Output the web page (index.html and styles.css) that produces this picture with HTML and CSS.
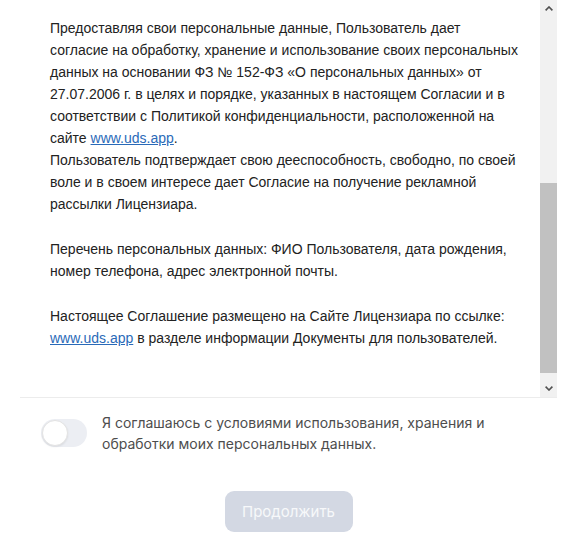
FILE: index.html
```html
<!DOCTYPE html>
<html lang="ru">
<head>
  <meta charset="UTF-8">
  <meta name="viewport" content="width=device-width, initial-scale=1.0">
  <title>Согласие на обработку персональных данных</title>
  <link rel="stylesheet" href="styles.css">
</head>
<body>
  <div class="sheet">
    <div class="terms-box">
      <div class="terms" id="terms">
        <h2 class="terms-title">Согласие на обработку персональных данных</h2>
        <p>Настоящим Пользователь, действуя свободно, своей волей и в своем интересе, а также подтверждая свою дееспособность, предоставляет Лицензиару согласие на обработку своих персональных данных. Под обработкой персональных данных понимается любое действие или совокупность действий, совершаемых с использованием средств автоматизации или без использования таких средств, включая сбор, запись, систематизацию, накопление, хранение, уточнение, извлечение, использование, передачу, удаление и уничтожение персональных данных.</p>
        <p>Согласие действует с момента его предоставления и до момента его отзыва Пользователем. Отзыв согласия может быть осуществлен путем направления Лицензиару письменного уведомления.</p>
        <p id="start">Предоставляя свои персональные данные, Пользователь дает согласие на обработку, хранение и использование своих персональных данных на основании ФЗ № 152-ФЗ «О персональных данных» от 27.07.2006 г. в целях и порядке, указанных в настоящем Согласии и в соответствии с Политикой конфиденциальности, расположенной на сайте <a href="#">www.uds.app</a>.<br>Пользователь подтверждает свою дееспособность, свободно, по своей воле и в своем интересе дает Согласие на получение рекламной рассылки Лицензиара.</p>
        <p>Перечень персональных данных: ФИО Пользователя, дата рождения, номер телефона, адрес электронной почты.</p>
        <p>Настоящее Соглашение размещено на Сайте Лицензиара по ссылке: <a href="#">www.uds.app</a> в разделе информации Документы для пользователей.</p>
      </div>
      <div class="scrollbar">
        <span class="sb-btn">
          <svg width="8" height="5" viewBox="0 0 8 5"><path d="M0.6 4.4 L4 1 L7.4 4.4" fill="none" stroke="#505050" stroke-width="1.6"/></svg>
        </span>
        <div class="sb-track" id="track">
          <div class="sb-thumb" id="thumb"></div>
        </div>
        <span class="sb-btn">
          <svg width="8" height="5" viewBox="0 0 8 5"><path d="M0.6 0.6 L4 4 L7.4 0.6" fill="none" stroke="#505050" stroke-width="1.6"/></svg>
        </span>
      </div>
    </div>

    <label class="agree">
      <span class="switch"><span class="knob"></span></span>
      <span class="agree-text">Я соглашаюсь с условиями использования, хранения и обработки моих персональных данных.</span>
    </label>

    <div class="actions">
      <button class="btn" disabled>Продолжить</button>
    </div>
  </div>
<script>
const terms = document.getElementById('terms');
const start = document.getElementById('start');
const track = document.getElementById('track');
const thumb = document.getElementById('thumb');

// show the end of the agreement, as after reading it through
terms.scrollTop = start.offsetTop - 17;

// place the thumb from the scroll position
function updateThumb() {
  const h = track.clientHeight;
  const total = terms.scrollHeight;
  thumb.style.height = Math.round(h * terms.clientHeight / total) + 'px';
  thumb.style.marginTop = Math.round(h * terms.scrollTop / total) + 'px';
}

updateThumb();
terms.addEventListener('scroll', updateThumb);
</script>
</body>
</html>
```

FILE: styles.css
```css
body {
  margin: 0;
  background: #fff;
}

.sheet {
  padding: 0 23px 0 20px;
}

.terms-box {
  display: flex;
  height: 397px;
  border-bottom: 1px solid #ececec;
}

.terms {
  position: relative;
  flex: 1;
  overflow: hidden;
  padding: 16px 21px 62px 30px;
  font-family: "Liberation Sans", Arial, sans-serif;
  font-size: 14px;
  line-height: 22px;
  color: #222;
}

.terms-title {
  margin: 0 0 16px;
  font-size: 16px;
  line-height: 22px;
}

.terms p {
  margin: 0 0 23px;
}

.terms p:last-child {
  margin-bottom: 0;
}

.terms a {
  color: #2a6ab8;
  text-decoration: underline;
}

/* classic scrollbar */
.scrollbar {
  flex: none;
  display: flex;
  flex-direction: column;
  width: 17px;
  background: #f1f1f1;
}

.sb-btn {
  display: flex;
  align-items: center;
  justify-content: center;
  height: 17px;
}

.sb-track {
  flex: 1;
  display: flex;
  flex-direction: column;
}

.sb-thumb {
  background: #c1c1c1;
}

.agree {
  display: flex;
  align-items: center;
  gap: 15px;
  padding: 14px 40px 0 21px;
  cursor: pointer;
}

.switch {
  position: relative;
  flex: none;
  width: 46px;
  height: 28px;
  border-radius: 14px;
  background: #eceef3;
}

.knob {
  position: absolute;
  left: 1px;
  top: 1px;
  width: 24px;
  height: 24px;
  border-radius: 50%;
  background: #fff;
  border: 1px solid #e3e3e3;
  box-shadow: 0 1px 2px rgba(0, 0, 0, 0.08);
}

.agree-text {
  font-family: Inter, "Noto Sans", sans-serif;
  font-size: 14px;
  line-height: 21px;
  color: #4d4d4d;
}

.actions {
  padding-top: 37px;
  text-align: center;
}

.btn {
  width: 128px;
  height: 41px;
  border: none;
  border-radius: 9px;
  background: #d3d8e3;
  color: #f7f8fa;
  font-family: Inter, "Noto Sans", sans-serif;
  font-size: 15px;
}
```
